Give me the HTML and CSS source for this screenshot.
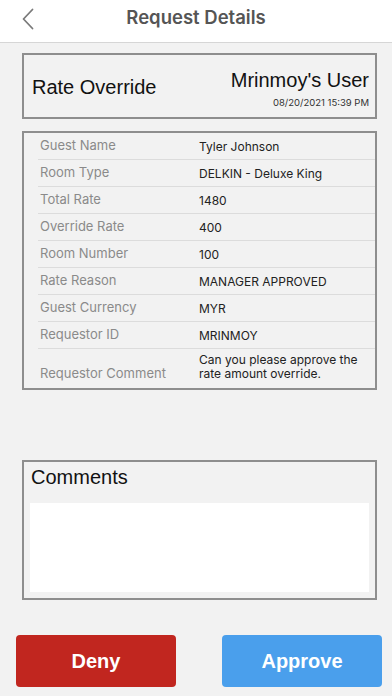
FILE: index.html
```html
<!DOCTYPE html>
<html lang="en">
<head>
    <meta charset="UTF-8">
    <meta name="viewport" content="width=device-width, initial-scale=1.0">
    <title>Request Details</title>
    <link rel="stylesheet" href="styles.css">
</head>
<body>
    <div class="nav-bar">
        <button class="back-button" aria-label="Back">
            <svg width="12" height="22" viewBox="0 0 12 22">
                <path d="M10.5 1.5 L1.5 11 L10.5 20.5" fill="none" stroke="#7a7a7a" stroke-width="1.8" stroke-linecap="round" stroke-linejoin="round"/>
            </svg>
        </button>
        <div class="nav-title">Request Details</div>
    </div>

    <div class="content">
        <div class="card summary-card">
            <div class="request-type">Rate Override</div>
            <div class="request-meta">
                <div class="request-user">Mrinmoy's User</div>
                <div class="request-date">08/20/2021 15:39 PM</div>
            </div>
        </div>

        <div class="card details-card">
            <div class="detail-row">
                <div class="detail-label">Guest Name</div>
                <div class="detail-value">Tyler Johnson</div>
            </div>
            <div class="detail-row">
                <div class="detail-label">Room Type</div>
                <div class="detail-value">DELKIN - Deluxe King</div>
            </div>
            <div class="detail-row">
                <div class="detail-label">Total Rate</div>
                <div class="detail-value">1480</div>
            </div>
            <div class="detail-row">
                <div class="detail-label">Override Rate</div>
                <div class="detail-value">400</div>
            </div>
            <div class="detail-row">
                <div class="detail-label">Room Number</div>
                <div class="detail-value">100</div>
            </div>
            <div class="detail-row">
                <div class="detail-label">Rate Reason</div>
                <div class="detail-value">MANAGER APPROVED</div>
            </div>
            <div class="detail-row">
                <div class="detail-label">Guest Currency</div>
                <div class="detail-value">MYR</div>
            </div>
            <div class="detail-row">
                <div class="detail-label">Requestor ID</div>
                <div class="detail-value">MRINMOY</div>
            </div>
            <div class="detail-row last-row">
                <div class="detail-label">Requestor Comment</div>
                <div class="detail-value">Can you please approve the rate amount override.</div>
            </div>
        </div>

        <div class="card comments-card">
            <div class="comments-title">Comments</div>
            <textarea class="comments-input"></textarea>
        </div>

        <div class="actions">
            <button class="action-button deny">Deny</button>
            <button class="action-button approve">Approve</button>
        </div>
    </div>
</body>
</html>
```

FILE: styles.css
```css
:root {
    --page-bg: #f2f2f2;
    --nav-bg: #ffffff;
    --nav-border: #d6d6d6;
    --card-border: #8e8e8e;
    --label-color: #8a8a8a;
    --value-color: #222;
    --row-line: #dcdcdc;
    --deny-color: #c1261f; /* Red */
    --approve-color: #4a9fec; /* Blue */
}

* {
    box-sizing: border-box;
}

body {
    margin: 0;
    background-color: var(--page-bg);
    font-family: "Liberation Sans", Arial, sans-serif;
    color: #111;
    width: 392px;
    height: 696px;
    overflow: hidden;
}

/* Nav bar */
.nav-bar {
    height: 43px;
    background-color: var(--nav-bg);
    border-bottom: 1px solid var(--nav-border);
    display: flex;
    align-items: center;
    justify-content: center;
    position: relative;
}

.back-button {
    position: absolute;
    left: 21px;
    top: 7px;
    background: none;
    border: none;
    padding: 0;
    width: 14px;
    height: 24px;
    display: flex;
    align-items: center;
    justify-content: center;
    cursor: pointer;
}

.nav-title {
    font-family: Inter, "Liberation Sans", sans-serif;
    font-size: 18.5px;
    font-weight: 600;
    color: #555;
    margin-top: -8px;
}

/* Content */
.content {
    display: flex;
    flex-direction: column;
    padding: 10px 15px 0 22px;
}

.card {
    border: 2px solid var(--card-border);
}

.summary-card {
    height: 66px;
    display: flex;
    justify-content: space-between;
    align-items: center;
    padding: 0 6px 0 8px;
}

.request-type {
    font-size: 20px;
    margin-top: 2px;
}

.request-meta {
    display: flex;
    flex-direction: column;
    align-items: flex-end;
    gap: 5px;
    margin-top: 4px;
}

.request-user {
    font-size: 20px;
}

.request-date {
    font-family: Inter, "Liberation Sans", sans-serif;
    font-size: 9.5px;
    color: #333;
}

/* Details table */
.details-card {
    margin-top: 12px;
    padding-left: 14px;
}

.detail-row {
    display: grid;
    grid-template-columns: 161px 1fr;
    align-items: center;
    height: 27px;
    border-bottom: 1px solid var(--row-line);
    font-family: Inter, "Liberation Sans", sans-serif;
}

.detail-row.last-row {
    height: 39px;
    border-bottom: none;
}

.detail-label {
    font-size: 13px;
    color: var(--label-color);
    padding-left: 2px;
    margin-top: -2px;
}

.detail-value {
    font-size: 12px;
    color: var(--value-color);
    margin-top: 2px;
    padding-right: 12px;
    line-height: 14px;
}

.last-row .detail-label {
    margin-top: 8px;
}

.last-row .detail-value {
    margin-top: -3px;
}

/* Comments */
.comments-card {
    margin-top: 70px;
    height: 140px;
    padding: 4px 6px 0 6px;
}

.comments-title {
    font-size: 20px;
    margin-left: 1px;
    height: 37px;
    line-height: 22px;
}

.comments-input {
    display: block;
    width: 100%;
    height: 89px;
    border: none;
    background: #fff;
    resize: none;
    font-family: inherit;
    outline: none;
}

/* Buttons */
.actions {
    display: flex;
    justify-content: space-between;
    margin: 35px -5px 0 -6px;
}

.action-button {
    width: 160px;
    height: 52px;
    border: none;
    border-radius: 4px;
    color: white;
    font-family: "Liberation Sans", Arial, sans-serif;
    font-size: 20px;
    font-weight: bold;
    cursor: pointer;
}

.action-button.deny {
    background-color: var(--deny-color);
}

.action-button.approve {
    background-color: var(--approve-color);
}
```
